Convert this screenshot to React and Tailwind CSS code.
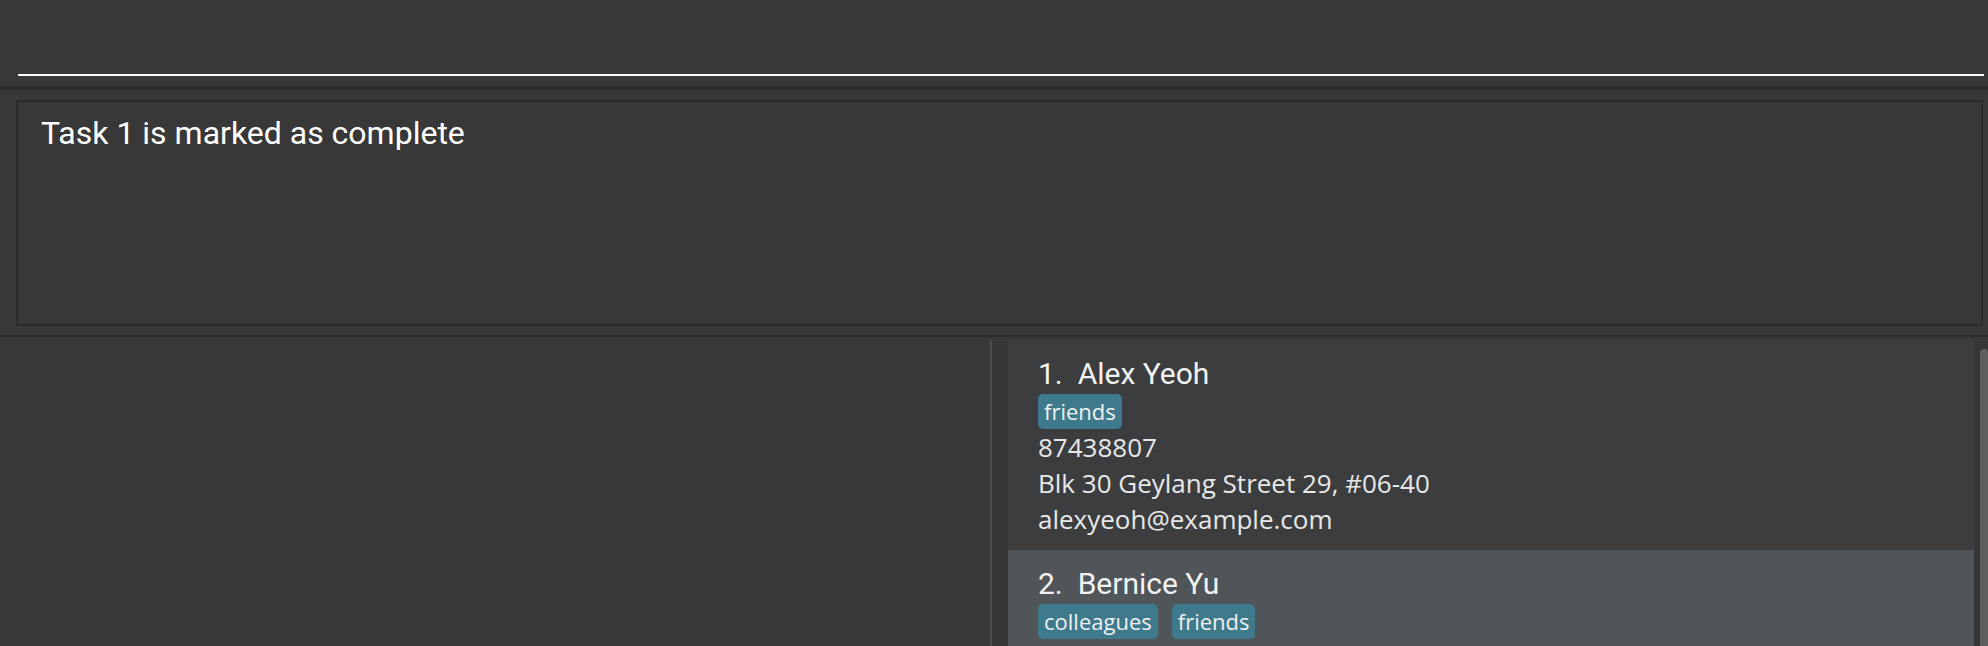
import React from "react";

const persons = [
  {
    name: "Alex Yeoh",
    tags: ["friends"],
    phone: "87438807",
    address: "Blk 30 Geylang Street 29, #06-40",
    email: "alexyeoh@example.com",
  },
  {
    name: "Bernice Yu",
    tags: ["colleagues", "friends"],
    phone: "99272758",
    address: "Blk 30 Lorong 3 Serangoon Gardens, #07-18",
    email: "berniceyu@example.com",
  },
];

function Card({ p, i }) {
  const bg = i % 2 === 0 ? "bg-[#3c3d3f]" : "bg-[#505559]";
  return (
    <div className={`${bg} pl-[30px] pt-[16px] pb-[13px] shrink-0`}>
      <div className="font-['Roboto',sans-serif] text-[30px] leading-[36px] text-[#f2f2f2] whitespace-pre">
        {`${i + 1}.  ${p.name}`}
      </div>
      <div className="flex gap-[14px] mt-[2px]">
        {p.tags.map((t) => (
          <span
            key={t}
            className="bg-[#3e7a8c] rounded-[5px] px-[6px] h-[35px] flex items-center font-['Open_Sans',sans-serif] text-[22px] text-[#f0f0f0]"
          >
            {t}
          </span>
        ))}
      </div>
      <div className="font-['Open_Sans',sans-serif] text-[26px] leading-[36px] text-[#e8e8e8]">
        <div>{p.phone}</div>
        <div>{p.address}</div>
        <div>{p.email}</div>
      </div>
    </div>
  );
}

export default function App() {
  return (
    <div className="w-full h-[646px] bg-[#383838] flex flex-col overflow-hidden">
      <div className="h-[86px] shrink-0 pl-[18px] pr-[4px] pb-[10px] flex items-end">
        <div className="h-[2px] w-full bg-white" />
      </div>
      <div className="h-[4px] shrink-0 bg-[#2b2b2b]" />
      <div className="h-[245px] shrink-0 pt-[10px] pl-[16px] pr-[5px]">
        <div className="h-[226px] border-2 border-[#2b2b2b] pl-[23px] pt-[11px]">
          <div className="font-['Roboto',sans-serif] text-[32px] leading-[40px] text-white">
            Task 1 is marked as complete
          </div>
        </div>
      </div>
      <div className="h-[2px] shrink-0 bg-[#2b2b2b]" />
      <div className="flex-1 flex pt-[3px] min-h-0">
        <div className="w-[990px] shrink-0" />
        <div className="w-[2px] shrink-0 bg-[#4a4a4a]" />
        <div className="flex-1 flex bg-[#363636] pl-[16px] min-h-0">
          <div className="w-[966px] flex flex-col overflow-hidden">
            {persons.map((p, i) => (
              <Card key={i} p={p} i={i} />
            ))}
          </div>
          <div className="flex-1 pl-[6px] pt-[9px]">
            <div className="w-full h-full bg-[#5e5e5e] rounded-t-[5px]" />
          </div>
        </div>
      </div>
    </div>
  );
}
